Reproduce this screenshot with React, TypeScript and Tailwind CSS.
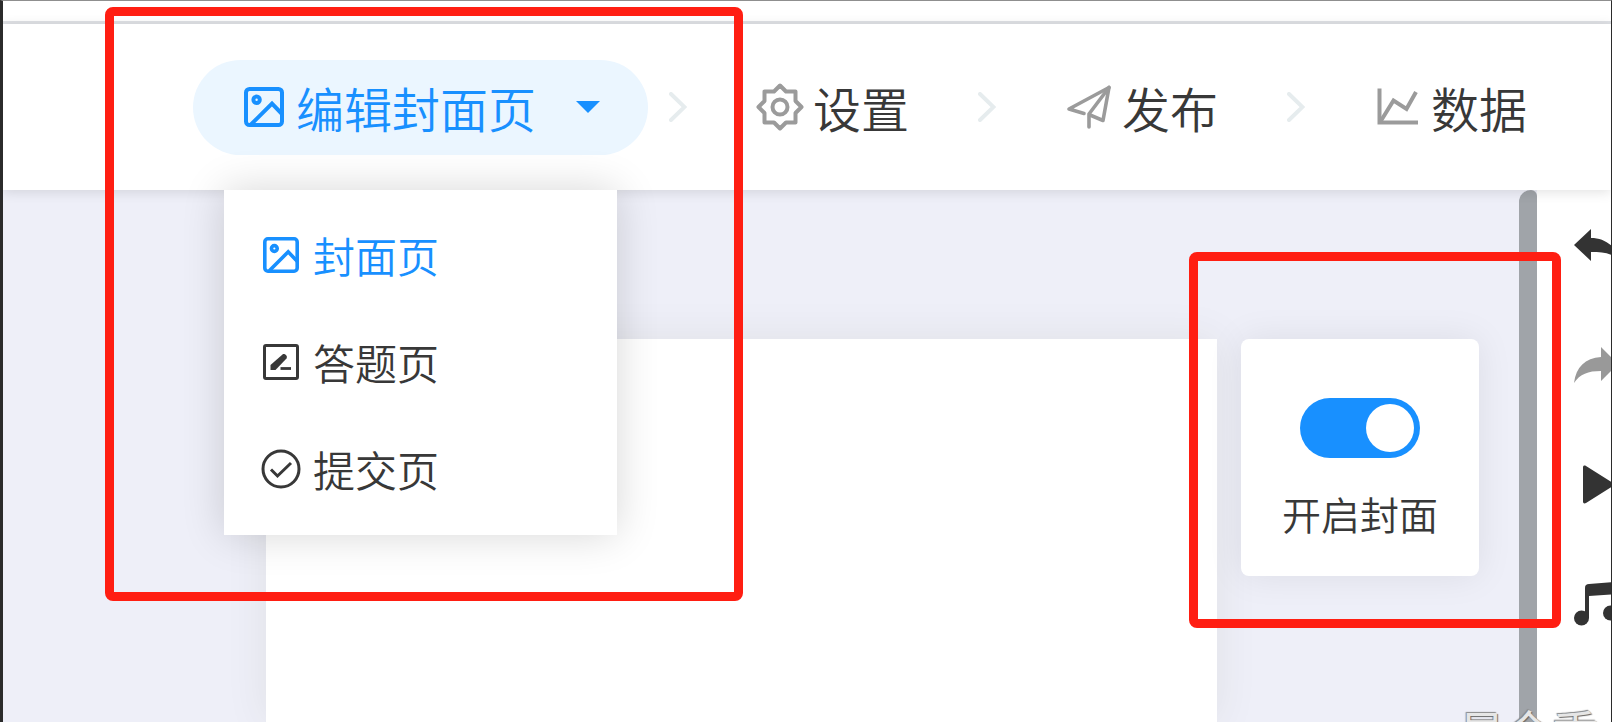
import React, { useState } from 'react';

type IconProps = { className?: string };

const ImageIcon: React.FC<IconProps> = ({ className }) => (
  <svg viewBox="0 0 40 40" fill="none" stroke="currentColor" className={className}>
    <rect x="2" y="2" width="36" height="36" rx="3.5" strokeWidth="4" />
    <circle cx="12.6" cy="12.8" r="3.2" strokeWidth="4" />
    <path d="M7 37.5 28 16.5l10 10.5" strokeWidth="4" />
  </svg>
);

const EditIcon: React.FC<IconProps> = ({ className }) => (
  <svg viewBox="0 0 36 36" fill="none" stroke="currentColor" className={className}>
    <rect x="1.5" y="1.5" width="33" height="33" rx="1.5" strokeWidth="3" />
    <path d="M7.5 26v-5L19.5 10.5c2-1.5 5.5 1.5 4 4L12.5 26z" fill="currentColor" stroke="none" />
    <path d="M17.5 24.5H28" strokeWidth="2.8" />
  </svg>
);

const CheckIcon: React.FC<IconProps> = ({ className }) => (
  <svg viewBox="0 0 40 40" fill="none" stroke="currentColor" className={className}>
    <circle cx="20" cy="20" r="18" strokeWidth="3" />
    <path d="M10 20.5l6.5 6.5L30 14" strokeWidth="3" />
  </svg>
);

const GearIcon: React.FC<IconProps> = ({ className }) => (
  <svg viewBox="0 0 48 48" fill="none" stroke="currentColor" strokeWidth="4" strokeLinejoin="round" className={className}>
    <path d="M24 2.5l6 6h9.5V18l6 6-6 6v9.5H30l-6 6-6-6H8.5V30l-6-6 6-6V8.5H18z" />
    <circle cx="24" cy="24" r="7.5" />
  </svg>
);

const PlaneIcon: React.FC<IconProps> = ({ className }) => (
  <svg viewBox="0 0 48 48" fill="none" stroke="currentColor" strokeWidth="3.6" strokeLinejoin="round" strokeLinecap="round" className={className}>
    <path d="M19 30.5L4 26 44 4.5 38 37.5l-13-5.5" />
    <path d="M44 4.5L24 31v13" />
  </svg>
);

const ChartIcon: React.FC<IconProps> = ({ className }) => (
  <svg viewBox="0 0 48 48" fill="none" stroke="currentColor" strokeWidth="4" className={className}>
    <path d="M5.5 5.5v34H44" />
    <path d="M6.5 38.5L19.5 17.5l13 8.5L42 9" />
  </svg>
);

const ChevronIcon: React.FC<IconProps> = ({ className }) => (
  <svg viewBox="0 0 18 30" fill="none" stroke="currentColor" strokeWidth="4" strokeLinecap="round" className={className}>
    <path d="M2 2l13.5 13L2 28" />
  </svg>
);

const MENU = [
  { label: '封面页', Icon: ImageIcon, size: 'size-9' },
  { label: '答题页', Icon: EditIcon, size: 'size-9' },
  { label: '提交页', Icon: CheckIcon, size: 'size-10' },
];

const STEPS = [
  { label: '设置', Icon: GearIcon },
  { label: '发布', Icon: PlaneIcon },
  { label: '数据', Icon: ChartIcon },
];

const App: React.FC = () => {
  const [page, setPage] = useState('封面页');
  const [open, setOpen] = useState(true);
  const [cover, setCover] = useState(true);

  return (
    <div className="relative flex min-h-screen flex-col overflow-hidden border-t border-r border-l-3 border-t-[#8f8f8f] border-r-[#2b2b2b] border-l-[#2b2b2b] bg-white font-['Noto_Sans_CJK_SC',sans-serif] font-[350] text-[#383838]">
      {/* Top strip */}
      <div className="h-[23px] border-b-3 border-[#dfe1e5]" />

      {/* Steps */}
      <header className="relative z-10 flex h-[166px] items-center bg-white pl-[190px] shadow-[0_2px_12px_rgba(0,0,0,0.12)]">
        <div className="relative shrink-0">
          <button
            onClick={() => setOpen(!open)}
            className="flex h-[95px] items-center rounded-full bg-[#ebf6ff] pr-12 pl-[51px] text-[48px] leading-none text-[#1890ff]"
          >
            <ImageIcon className="mr-3 size-10" />
            <span>编辑{page}</span>
            <svg viewBox="0 0 24 12" className="ml-10 h-3 w-6" fill="currentColor">
              <path d="M0 0h24L12 12z" />
            </svg>
          </button>
          {open && (
            <ul className="absolute top-[130px] left-[31px] w-[393px] bg-white py-3 shadow-[0_0_40px_rgba(0,0,0,0.16)]">
              {MENU.map(({ label, Icon, size }) => (
                <li key={label}>
                  <button
                    onClick={() => setPage(label)}
                    className={`flex h-[107px] w-full items-center pl-[37px] text-[42px] leading-none ${page === label ? 'text-[#1890ff]' : ''}`}
                  >
                    <span className="mr-3 flex w-10 justify-center">
                      <Icon className={size} />
                    </span>
                    {label}
                  </button>
                </li>
              ))}
            </ul>
          )}
        </div>

        <nav className="flex shrink-0 items-center pl-[21px]">
          {STEPS.map(({ label, Icon }, i) => (
            <div key={label} className={`flex items-center ${i > 0 ? 'ml-[69px]' : ''}`}>
              <ChevronIcon className="mr-[69px] h-[30px] w-[18px] text-[#e6ecee]" />
              <a href="#" className="flex items-center gap-[9px] text-[48px] leading-none">
                <Icon className="size-12 text-[#9b9b9b]" />
                {label}
              </a>
            </div>
          ))}
        </nav>
      </header>

      <div className="flex flex-1">
        {/* Canvas */}
        <main className="flex flex-1 items-stretch bg-[#eeeff8] pt-[149px] pr-10 pl-[263px]">
          <section className="flex-1 bg-white shadow-[0_0_40px_rgba(60,60,0,0.08)]" />
          <aside className="ml-6">
            <label className="flex h-[237px] w-[238px] flex-col items-center rounded-lg bg-white pt-[59px] text-[39px] leading-none shadow-[0_0_36px_rgba(0,0,0,0.08)]">
              <input
                type="checkbox"
                role="switch"
                checked={cover}
                onChange={(e) => setCover(e.target.checked)}
                className="mb-9 flex h-[60px] w-[120px] shrink-0 appearance-none items-center rounded-full bg-gray-300 px-1.5 before:size-12 before:rounded-full before:bg-white before:content-[''] checked:justify-end checked:bg-[#1890ff]"
              />
              开启封面
            </label>
          </aside>
        </main>

        {/* Scrollbar */}
        <div className="bg-[#eeeff8]">
          <div className="h-full w-[18px] rounded-tl-xl rounded-tr-md bg-[#a0a4a9]" />
        </div>

        {/* Toolbar, runs off the right edge */}
        <div className="flex w-[74px] flex-col gap-[72px] overflow-hidden pt-[30px] pl-[37px] text-[#333]">
          <button aria-label="撤销" className="size-12">
            <svg viewBox="0 0 48 48" className="size-12" fill="currentColor">
              <path d="M0 25L17 9v9c14 0 25 8 30 24-8-9-17-10-30-10v9z" />
            </svg>
          </button>
          <button aria-label="重做" className="size-12 text-[#999]">
            <svg viewBox="0 0 48 48" className="size-12" fill="currentColor">
              <path d="M44 24L27 7v10C11 18 2 27 0 43c6-9 14-12 27-12v10z" />
            </svg>
          </button>
          <button aria-label="预览" className="size-12">
            <svg viewBox="0 0 48 48" className="size-12" fill="currentColor">
              <path d="M9 7.500c0-2 1.500-2.500 3-1.500l27 17c1.500 1 1.500 2 0 3L12 43c-1.500 1-3 .5-3-1.500z" />
            </svg>
          </button>
          <button aria-label="音乐" className="size-12">
            <svg viewBox="0 0 48 48" className="size-12" fill="currentColor">
              <path d="M11 8c0-3 1.500-4 4-4l27-2c3 0 4 1 4 3v27h-3V14l-28 2v22h-4z" />
              <circle cx="7.500" cy="38" r="7.500" />
              <circle cx="36.500" cy="33" r="7.500" />
            </svg>
          </button>
        </div>
      </div>

      {/* Watermark */}
      <span className="pointer-events-none absolute right-3 -bottom-[31px] text-[47px] leading-none font-normal text-[#e6e6e6] [text-shadow:1px_1px_1px_#666,-1px_-1px_1px_#888]">
        易企秀
      </span>

      {/* Highlight boxes */}
      <div className="pointer-events-none absolute top-[6px] left-[102px] z-20 h-[594px] w-[638px] rounded-lg border-[9px] border-[#ff1e12]" />
      <div className="pointer-events-none absolute top-[251px] right-[50px] z-20 h-[376px] w-[372px] rounded-lg border-[9px] border-[#ff1e12]" />
    </div>
  );
};

export default App;
